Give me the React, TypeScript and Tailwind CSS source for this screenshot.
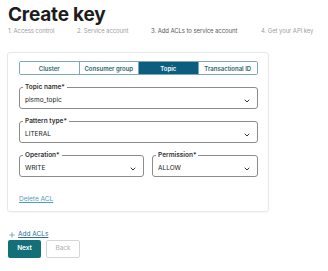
import { ChevronDown, Plus } from "lucide-react";

const steps = [
  { label: "1. Access control", w: "w-[69px]" },
  { label: "2. Service account", w: "w-[74px]" },
  { label: "3. Add ACLs to service account", w: "w-[110px]" },
  { label: "4. Get your API key", w: "" },
];

const tabs = ["Cluster", "Consumer group", "Topic", "Transactional ID"];

function SelectField({
  label,
  value,
  className = "",
}: {
  label: string;
  value: string;
  className?: string;
}) {
  return (
    <fieldset
      className={`border border-[#8c8c8c] rounded-[3px] pl-[3px] pr-[6px] pb-0 h-[26px] ${className}`}
    >
      <legend className="px-[2px] text-[6.5px] leading-[8px] font-semibold text-[#333]">
        {label}
      </legend>
      <div className="flex items-center justify-between h-[20px] pl-[2px]">
        <span className="text-[6.5px] text-[#222]">{value}</span>
        <ChevronDown size={8} strokeWidth={3} className="text-[#333]" />
      </div>
    </fieldset>
  );
}

export default function App() {
  return (
    <div
      className="w-[328px] h-[271px] bg-white pl-[8px] overflow-hidden"
      style={{ fontFamily: "Inter, 'Liberation Sans', sans-serif" }}
    >
      <h1 className="pt-[4px] text-[19px] leading-[22px] font-bold text-[#1c1c1c] tracking-[-0.2px]">
        Create key
      </h1>

      {/* Steps */}
      <div className="flex text-[6px] leading-[10px] text-[#a0a0a0] whitespace-nowrap tracking-[-0.1px]">
        {steps.map((s, i) => (
          <span key={s.label} className={`${s.w} ${i === 2 ? "text-[#5a5a5a]" : ""}`}>
            {s.label}
          </span>
        ))}
      </div>

      {/* Card */}
      <div className="mt-[16px] w-[262px] ml-[-1px] border border-[#e8e8e8] rounded-[3px] shadow-[0_1px_2px_rgba(0,0,0,0.04)] pt-[8px] pl-[11px] pr-[10px] pb-[7px]">
        <div className="flex h-[14px] border border-[#7fa7b8] rounded-[2px] overflow-hidden">
          {tabs.map((t) => (
            <div
              key={t}
              className={`flex-1 flex items-center justify-center text-[6px] font-semibold whitespace-nowrap border-l border-[#7fa7b8] first:border-l-0 ${
                t === "Topic"
                  ? "bg-[#0c5e7e] text-white"
                  : "bg-white text-[#2d6479]"
              }`}
            >
              {t}
            </div>
          ))}
        </div>

        <div className="flex flex-col gap-[8px] mt-[8px]">
          <SelectField label="Topic name*" value="pismo_topic" />
          <SelectField label="Pattern type*" value="LITERAL" />
          <div className="flex gap-[8px]">
            <SelectField label="Operation*" value="WRITE" className="w-[125px]" />
            <SelectField label="Permission*" value="ALLOW" className="flex-1" />
          </div>
        </div>

        <div className="mt-[17px] text-[6.5px] leading-[10px] text-[#4f9cc2] underline">
          Delete ACL
        </div>
      </div>

      {/* Footer */}
      <div className="mt-[18px] flex items-center gap-[2px] text-[6.5px] leading-[9px] text-[#2c6d9a]">
        <Plus size={8} strokeWidth={1.5} className="text-[#1f5f80]" />
        <span className="underline">Add ACLs</span>
      </div>
      <div className="flex gap-[5px] mt-[1px]">
        <button className="w-[33px] h-[18px] rounded-[2px] bg-[#136f78] text-white text-[6.5px] font-semibold">
          Next
        </button>
        <button className="w-[34px] h-[18px] rounded-[2px] border border-[#d5d5d5] bg-white text-[#b0b0b0] text-[6.5px]">
          Back
        </button>
      </div>
    </div>
  );
}
